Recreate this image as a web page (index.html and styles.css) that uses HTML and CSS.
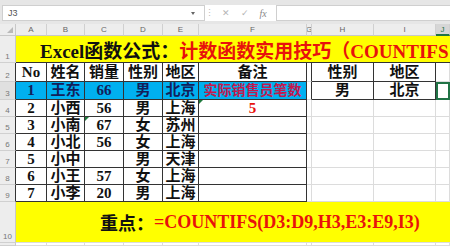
FILE: index.html
```html
<!DOCTYPE html>
<html lang="zh">
<head>
<meta charset="utf-8">
<link rel="stylesheet" href="styles.css">
</head>
<body>
<div class="bar">
  <div class="namebox"><span>J3</span><span class="dd"></span></div>
  <div class="sep">⋮</div>
  <div class="fxicons"><span>✕</span><span>✓</span><span class="fx">fx</span></div>
  <div class="input"></div>
</div>
<div class="sheet">
  <div class="corner"><span class="tri"></span></div>
  <div class="ch">A</div><div class="ch">B</div><div class="ch">C</div><div class="ch">D</div><div class="ch">E</div><div class="ch">F</div><div class="ch">G</div><div class="ch">H</div><div class="ch">I</div><div class="ch sel">J</div>

  <div class="rh">1</div>
  <div class="title"><span class="blk">Excel函数公式：</span><span class="red">计数函数实用技巧（COUNTIFS</span></div>

  <div class="rh tb">2</div>
  <div class="t">No</div><div class="t">姓名</div><div class="t">销量</div><div class="t">性别</div><div class="t">地区</div><div class="t">备注</div><div class="c gd"></div><div class="t">性别</div><div class="t">地区</div><div class="c"></div>

  <div class="rh tb rsel">3</div>
  <div class="t blue">1</div><div class="t blue">王东</div><div class="t blue">66</div><div class="t blue">男</div><div class="t blue">北京</div><div class="t blue note">实际销售员笔数</div><div class="c gd"></div><div class="t">男</div><div class="t">北京</div><div class="c selcell"></div>

  <div class="rh tb">4</div>
  <div class="t">2</div><div class="t">小西</div><div class="t">56</div><div class="t">男</div><div class="t">上海</div><div class="t res err">5</div><div class="c"></div><div class="c"></div><div class="c"></div><div class="c"></div>

  <div class="rh tb">5</div>
  <div class="t">3</div><div class="t">小南</div><div class="t err">67</div><div class="t">女</div><div class="t">苏州</div><div class="t"></div><div class="c"></div><div class="c"></div><div class="c"></div><div class="c"></div>

  <div class="rh tb">6</div>
  <div class="t">4</div><div class="t">小北</div><div class="t">56</div><div class="t">女</div><div class="t">上海</div><div class="t"></div><div class="c"></div><div class="c"></div><div class="c"></div><div class="c"></div>

  <div class="rh tb">7</div>
  <div class="t">5</div><div class="t">小中</div><div class="t"></div><div class="t">男</div><div class="t">天津</div><div class="t"></div><div class="c"></div><div class="c"></div><div class="c"></div><div class="c"></div>

  <div class="rh tb">8</div>
  <div class="t">6</div><div class="t">小王</div><div class="t">57</div><div class="t">女</div><div class="t">上海</div><div class="t"></div><div class="c"></div><div class="c"></div><div class="c"></div><div class="c"></div>

  <div class="rh tb">9</div>
  <div class="t">7</div><div class="t">小李</div><div class="t">20</div><div class="t">男</div><div class="t">上海</div><div class="t"></div><div class="c"></div><div class="c"></div><div class="c"></div><div class="c"></div>

  <div class="rh">10</div>
  <div class="key"><span class="blk">重点：</span><span class="red">=COUNTIFS(D3:D9,H3,E3:E9,I3)</span></div>

  <div class="rh"></div>
  <div class="c"></div><div class="c"></div><div class="c"></div><div class="c"></div><div class="c"></div><div class="c"></div><div class="c"></div><div class="c"></div><div class="c"></div><div class="c"></div>
</div>
</body>
</html>
```

FILE: styles.css
```css
html, body {
  margin: 0;
  padding: 0;
  background: #fff;
  overflow: hidden;
}
body {
  width: 450px;
  height: 246px;
  font-family: "Liberation Sans", Arial, sans-serif;
}
.bar {
  height: 24px;
  box-sizing: border-box;
  padding: 5px 0 3px 2px;
  background: #e6e6e6;
  display: flex;
}
.namebox {
  width: 203px;
  box-sizing: border-box;
  background: #fff;
  border: 1px solid #cfcfcf;
  display: flex;
  align-items: center;
  justify-content: space-between;
  padding: 0 9px 0 5px;
  font-size: 9px;
  color: #555;
}
.dd {
  width: 0;
  height: 0;
  border-left: 2.5px solid transparent;
  border-right: 2.5px solid transparent;
  border-top: 3px solid #666;
}
.sep {
  width: 8px;
  background: #fff;
  color: #bbb;
  font-size: 9px;
  display: flex;
  align-items: center;
  justify-content: center;
}
.fxicons {
  width: 63px;
  background: #fff;
  display: flex;
  align-items: center;
  justify-content: space-around;
  padding: 0 4px;
  box-sizing: border-box;
  color: #b5b5b5;
  font-size: 9px;
}
.fx {
  font-family: "Liberation Serif", serif;
  font-style: italic;
  color: #888;
  font-size: 10px;
}
.input {
  flex: 1;
  background: #fff;
  border: 1px solid #cfcfcf;
  border-right: none;
}
.sheet {
  display: grid;
  grid-template-columns: 16px 31px 38px 39px 39px 36px 108px 5px 62px 62px 1fr;
  grid-template-rows: 12px 27px 19px 18px 17px 17px 17px 17px 17px 17px 41px 1fr;
  height: 222px;
}
.sheet > div {
  box-sizing: border-box;
  min-width: 0;
  overflow: hidden;
}
.c {
  border-right: 1px solid #dcdcdc;
  border-bottom: 1px solid #dcdcdc;
}
.corner {
  background: #ededed;
  border-right: 1px solid #c8c8c8;
  border-bottom: 1px solid #c8c8c8;
  position: relative;
}
.tri {
  position: absolute;
  right: 2px;
  bottom: 2px;
  width: 0;
  height: 0;
  border-left: 6px solid transparent;
  border-bottom: 6px solid #b9b9b9;
}
.ch {
  background: #ededed;
  border-right: 1px solid #d0d0d0;
  border-bottom: 1px solid #c8c8c8;
  font-size: 8px;
  color: #666;
  display: flex;
  align-items: center;
  justify-content: center;
}
.ch.sel {
  background: #d6d6d6;
  border-bottom: 2px solid #217346;
  color: #217346;
}
.rh {
  background: #ededed;
  border-right: 1px solid #c8c8c8;
  border-bottom: 1px solid #d0d0d0;
  font-size: 8px;
  color: #777;
  display: flex;
  align-items: flex-end;
  justify-content: center;
  padding-bottom: 1px;
}
.rh.tb {
  border-right: 1px solid #333;
}
.rh.rsel {
  background: #e0e0e0;
}
.title, .key {
  grid-column: 2 / -1;
  background: #ffff00;
  font-family: "Liberation Serif", "Noto Sans CJK SC", serif;
  font-weight: 700;
  white-space: nowrap;
  display: flex;
  align-items: center;
}
.title {
  font-size: 19px;
  padding-left: 24px;
  border-bottom: 1px solid #333;
}
.key {
  font-size: 18px;
  padding-left: 84px;
  border-bottom: 1px solid #dcdcdc;
}
.blk { color: #111; }
.red { color: #e8120c; }
.t {
  border-right: 1px solid #333;
  border-bottom: 1px solid #333;
  font-family: "Liberation Serif", "Noto Sans CJK SC", serif;
  font-weight: 700;
  font-size: 15px;
  color: #111;
  display: flex;
  align-items: center;
  justify-content: center;
  white-space: nowrap;
  line-height: 1;
}
.gd {
  border-right: 1px solid #333;
}
.blue {
  background: #00b0f0;
  color: #13205a;
}
.note {
  color: #c2184e;
  font-size: 14px;
}
.res {
  color: #e8120c;
}
.err {
  position: relative;
}
.err::before {
  content: "";
  position: absolute;
  left: 0;
  top: 0;
  width: 0;
  height: 0;
  border-top: 4px solid #1e7a3c;
  border-right: 4px solid transparent;
}
.selcell {
  border-right: 1px solid #dcdcdc;
  border-bottom: 1px solid #dcdcdc;
  outline: 2px solid #217346;
  outline-offset: -2px;
}
```
